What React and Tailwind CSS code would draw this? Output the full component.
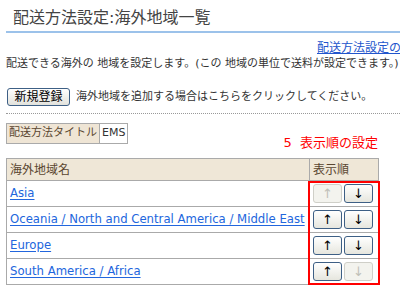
import React from "react";

const regions = [
  { name: "Asia", up: false, down: true },
  { name: "Oceania / North and Central America / Middle East", up: true, down: true },
  { name: "Europe", up: true, down: true },
  { name: "South America / Africa", up: true, down: false },
];

function OrderButton({ label, enabled }) {
  return (
    <button
      className={
        enabled
          ? "w-[29px] h-[19px] rounded-[3px] border border-[#3d5f85] bg-gradient-to-b from-white to-[#e6e6de] text-[13px] leading-none text-black"
          : "w-[29px] h-[19px] rounded-[3px] border border-[#cfcfc8] bg-[#f3f3ee] text-[13px] leading-none text-[#c0c0b8]"
      }
    >
      {label}
    </button>
  );
}

export default function App() {
  const jp = { fontFamily: '"DejaVu Sans", "Noto Sans CJK JP", sans-serif' };

  return (
    <div className="w-[400px] h-[294px] overflow-hidden bg-white text-[#333]" style={jp}>
      <div className="w-[470px] pl-[6px]">
        <h1 className="pl-[7px] pt-[7px] pb-[2px] text-[16px] leading-[22px] text-[#444]">
          配送方法設定:海外地域一覧
        </h1>
        <div className="h-[2px] bg-[#9cc2ea]" />

        <div className="pl-[311px] pt-[8px] text-[12px] leading-[14px] whitespace-nowrap">
          <a href="#" className="text-[#2255cc] underline">
            配送方法設定の一覧に戻る
          </a>
        </div>
        <p className="pt-[2px] text-[11px] leading-[14px] whitespace-nowrap">
          配送できる海外の 地域を設定します。(この 地域の単位で送料が設定できます。)
        </p>

        <div className="flex items-center gap-[6px] pt-[17px] pl-[1px]">
          <button className="h-[18px] w-[63px] rounded-[3px] border border-[#3d5f85] bg-gradient-to-b from-white to-[#e2e2dc] text-[12px] leading-none text-black">
            新規登録
          </button>
          <span className="text-[11px]">海外地域を追加する場合はこちらをクリックしてください。</span>
        </div>

        <div className="mt-[7px] border-t border-dotted border-[#999]" />

        <div className="flex items-end justify-between w-[372px] pt-[9px]">
          <table className="border-collapse text-[11px]">
            <tbody>
              <tr>
                <td className="h-[20px] px-[2px] border border-[#aaa] bg-[#efe5d5] text-[#5a4630]">
                  配送方法タイトル
                </td>
                <td className="h-[20px] px-[2px] border border-[#aaa] bg-white text-[#333]">EMS</td>
              </tr>
            </tbody>
          </table>
          <span className="text-[13px] leading-[13px] text-[#ff0000] whitespace-nowrap translate-y-[5px]">
            5&nbsp;&nbsp;表示順の設定
          </span>
        </div>

        <div className="relative mt-[14px] w-[372px]">
          <table className="w-[372px] table-fixed border-collapse text-[12px]">
            <colgroup>
              <col className="w-[303px]" />
              <col className="w-[69px]" />
            </colgroup>
            <thead>
              <tr className="bg-[#efe7d7] text-[#5a4630]">
                <th className="h-[22px] px-[3px] text-left font-normal border border-[#aaa]">海外地域名</th>
                <th className="h-[22px] px-[3px] text-left font-normal border border-[#aaa]">表示順</th>
              </tr>
            </thead>
            <tbody>
              {regions.map((r) => (
                <tr key={r.name}>
                  <td className="h-[26px] px-[3px] border border-[#aaa] whitespace-nowrap overflow-hidden text-[11.7px]">
                    <a href="#" className="text-[#2266dd] underline underline-offset-2">
                      {r.name}
                    </a>
                  </td>
                  <td className="h-[26px] px-[3px] border border-[#aaa]">
                    <div className="flex gap-[2px]">
                      <OrderButton label="↑" enabled={r.up} />
                      <OrderButton label="↓" enabled={r.down} />
                    </div>
                  </td>
                </tr>
              ))}
            </tbody>
          </table>
          <div className="absolute left-[302px] top-[23px] w-[72px] h-[104px] border-2 border-[#ff0000]" />
        </div>
      </div>
    </div>
  );
}
